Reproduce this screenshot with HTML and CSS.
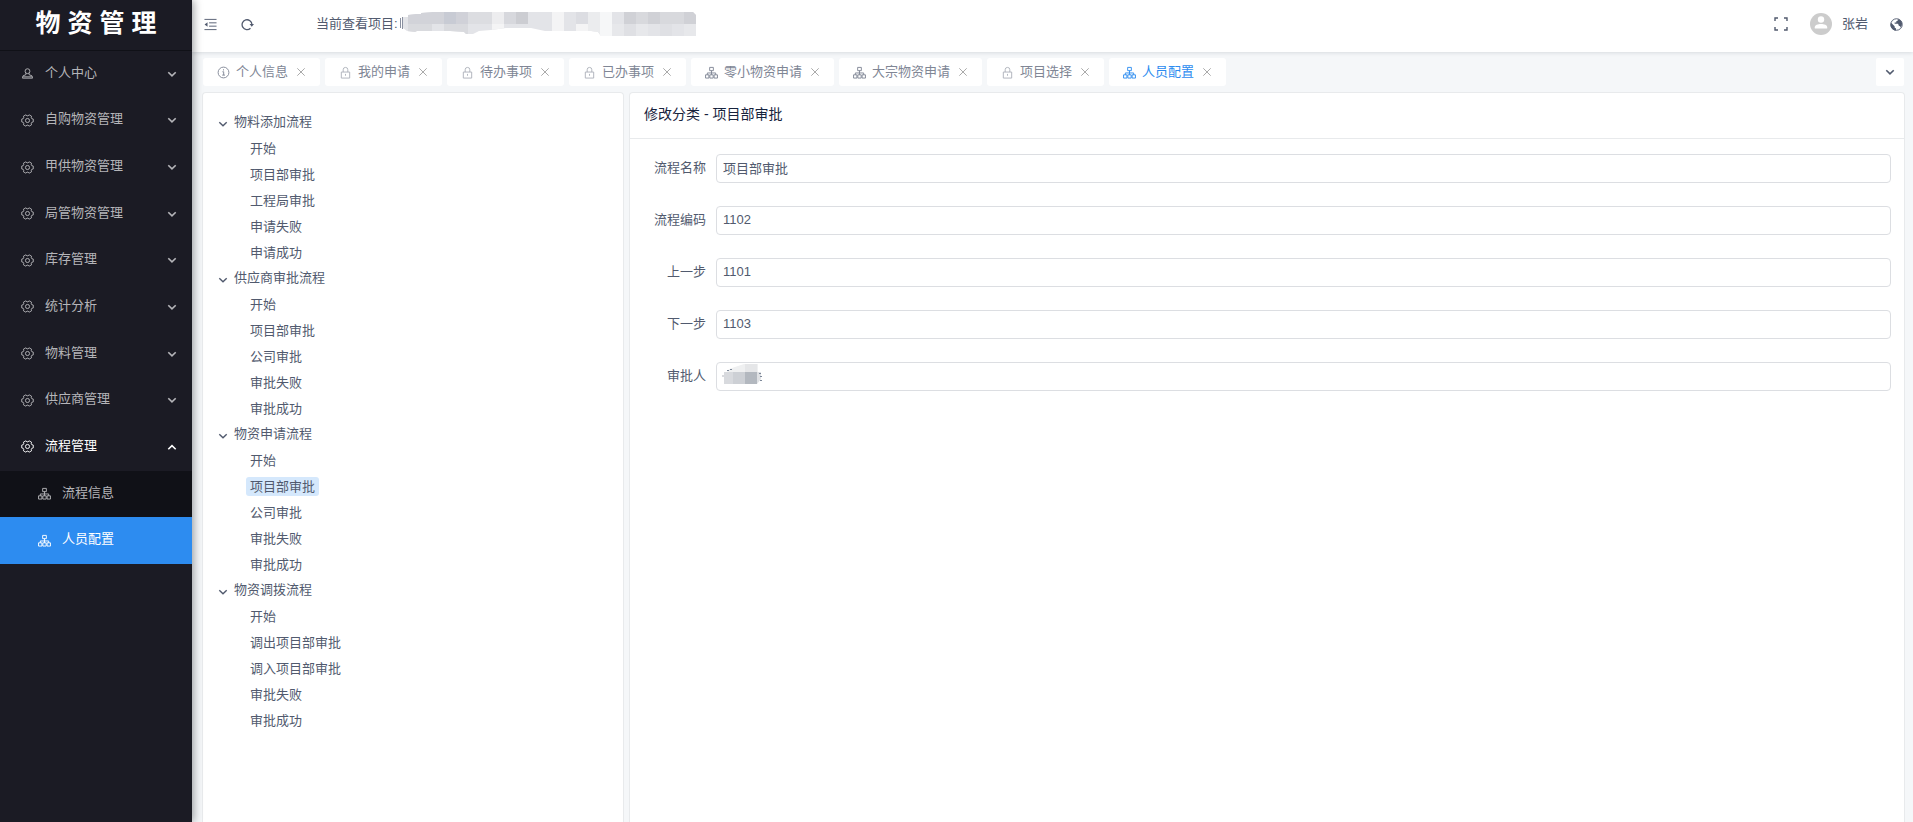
FILE: index.html
```html
<!DOCTYPE html>
<html lang="zh-CN">
<head>
<meta charset="utf-8">
<title>物资管理</title>
<link rel="stylesheet" href="styles.css">
</head>
<body>
<svg class="sprite" aria-hidden="true">
  <symbol id="i-gear" viewBox="0 0 14 14"><path d="M13.200 5.500v3l-1.600.5-.6.9.4 1.700-2.600 1.500L7.500 12h-1l-1.300 1.100-2.600-1.500.4-1.700-.6-.9-1.600-.5v-3L2.400 5l.6-.9-.4-1.700L5.200.9 6.500 2h1L8.800.9l2.600 1.500-.4 1.700.6.9z"/><circle cx="7" cy="7" r="2.200"/></symbol>
  <symbol id="i-person" viewBox="0 0 14 14"><circle cx="7" cy="4.500" r="2.600"/><path d="M5.300 6.600v1.600L2.100 9.600 1.600 12h10.800l-.5-2.400-3.200-1.400V6.600M2.300 10.600h9.400"/></symbol>
  <symbol id="i-tree" viewBox="0 0 14 14"><path d="M5 1.500h4v3.500H5zM7 5v4.500M2.500 9.500V7.500h9v2M.6 9.500h3.600v3.500H.6zM5.200 9.500h3.600v3.500H5.200zM9.800 9.500h3.600v3.500H9.800z"/></symbol>
  <symbol id="i-lock" viewBox="0 0 14 14"><path d="M2.500 6.500h9v6.500h-9zM4.500 6.500V4a2.500 2.500 0 0 1 5 0v2.500M7 8.500v2"/></symbol>
  <symbol id="i-info" viewBox="0 0 14 14"><circle cx="7" cy="7" r="5.800"/><path d="M5.800 6.200h1.400v3.600M5.600 9.800h3M7 3.500v1.300"/></symbol>
  <symbol id="i-down" viewBox="0 0 10 10"><path d="M1.300 3.200 5 6.800l3.700-3.600"/></symbol>
  <symbol id="i-up" viewBox="0 0 10 10"><path d="M1.300 7.200 5 3.600l3.700 3.600"/></symbol>
  <symbol id="i-close" viewBox="0 0 10 10"><path d="m1.300 1.300 7.400 7.400m0-7.400L1.300 8.700"/></symbol>
</svg>
<div class="layout">
  <aside class="sidebar">
    <h1 class="logo">物 资 管 理</h1>
    <nav class="menu">
      <button class="menu-item"><svg class="icon"><use href="#i-person"/></svg><span>个人中心</span><svg class="arrow"><use href="#i-down"/></svg></button>
      <button class="menu-item"><svg class="icon"><use href="#i-gear"/></svg><span>自购物资管理</span><svg class="arrow"><use href="#i-down"/></svg></button>
      <button class="menu-item"><svg class="icon"><use href="#i-gear"/></svg><span>甲供物资管理</span><svg class="arrow"><use href="#i-down"/></svg></button>
      <button class="menu-item"><svg class="icon"><use href="#i-gear"/></svg><span>局管物资管理</span><svg class="arrow"><use href="#i-down"/></svg></button>
      <button class="menu-item"><svg class="icon"><use href="#i-gear"/></svg><span>库存管理</span><svg class="arrow"><use href="#i-down"/></svg></button>
      <button class="menu-item"><svg class="icon"><use href="#i-gear"/></svg><span>统计分析</span><svg class="arrow"><use href="#i-down"/></svg></button>
      <button class="menu-item"><svg class="icon"><use href="#i-gear"/></svg><span>物料管理</span><svg class="arrow"><use href="#i-down"/></svg></button>
      <button class="menu-item"><svg class="icon"><use href="#i-gear"/></svg><span>供应商管理</span><svg class="arrow"><use href="#i-down"/></svg></button>
      <button class="menu-item open"><svg class="icon"><use href="#i-gear"/></svg><span>流程管理</span><svg class="arrow"><use href="#i-up"/></svg></button>
      <a class="menu-item sub" href="#info"><svg class="icon"><use href="#i-tree"/></svg><span>流程信息</span></a>
      <a class="menu-item sub active" href="#staff"><svg class="icon"><use href="#i-tree"/></svg><span>人员配置</span></a>
    </nav>
  </aside>
  <div class="main">
    <header class="header">
      <button class="tool" aria-label="折叠菜单"><svg class="icon" viewBox="0 0 14 14"><path d="M.5 1.500h13M5.500 5.200h8M5.500 8.800h8M.5 12.500h13"/><path class="solid" d="M3.800 4.600v4.800L.6 7z"/></svg></button>
      <button class="tool" aria-label="刷新"><svg class="icon" viewBox="0 0 14 14"><path class="bold" d="M10.200 11A5.300 5.300 0 1 1 11.800 7"/><path class="solid" d="M9.200 6.500H14l-2.400 2.900z"/></svg></button>
      <div class="project">
        <span>当前查看项目:</span>
        <svg class="redacted" viewBox="0 0 296 24" role="img" aria-label="已隐藏的项目名称">
          <clipPath id="smear"><path d="M3 5h5V3l8-1h5V1l12-1h260l3 3v21h-95l-3-4-7-1h-46l-14-3h-25l-15 2-12 1-6 3h-7l-2-2-14-1H17l-2 1-8-1-4-3z"/></clipPath>
          <path class="bar" d="M.5 6v10M2.500 5v12"/>
          <g clip-path="url(#smear)">
            <path fill="#e3e4e8" d="M0 0h296v24H0z"/>
            <path fill="#d2d3d9" d="M8 0h36v12H8z"/><path fill="#c8cbd4" d="M44 0h12v12H44z"/><path fill="#d0d1d8" d="M56 0h12v12H56z"/>
            <path fill="#dcdde1" d="M68 0h24v12H68z"/><path fill="#ededef" d="M92 0h12v12H92z"/><path fill="#d7d8dd" d="M104 0h12v12h-12z"/><path fill="#cccdd2" d="M116 0h12v12h-12z"/>
            <path fill="#d9dade" d="M8 12h24v12H8zM44 12h24v12H44z"/><path fill="#f4f4f5" d="M92 12h12v12H92zM152 0h12v24h-12zM176 12h12v12h-12z"/>
            <path fill="#dcdde2" d="M176 0h12v12h-12z"/><path fill="#ebecee" d="M188 0h12v24h-12z"/><path fill="#f6f7f8" d="M200 0h12v24h-12z"/>
            <path fill="#d0d1d6" d="M224 0h12v12h-12zM248 0h12v12h-12zM284 0h12v12h-12z"/><path fill="#d8d9dd" d="M236 0h12v12h-12zM260 0h24v12h-24z"/>
            <path fill="#dfe0e4" d="M224 12h12v12h-12zM260 12h12v12h-12z"/><path fill="#e7e8eb" d="M212 12h12v12h-12zM236 12h12v12h-12zM284 12h12v12h-12z"/>
          </g>
        </svg>
      </div>
      <button class="tool end" aria-label="全屏"><svg class="icon full" viewBox="0 0 14 14"><path d="M1 4V1h3M10 1h3v3M13 10v3h-3M4 13H1v-3"/></svg></button>
      <button class="user"><svg class="avatar" viewBox="0 0 22 22"><circle cx="11" cy="11" r="11" fill="#ccc"/><circle cx="11" cy="6.500" r="3.200" fill="#fff"/><path d="M4.800 15.500v-1.300c0-2.200 3-3.200 6.200-3.200s6.200 1 6.200 3.200v1.300z" fill="#fff"/></svg><span>张岩</span></button>
      <button class="tool" aria-label="语言"><svg class="icon" viewBox="0 0 14 14"><circle cx="7" cy="7" r="6.200"/><path class="solid" d="M1.200 5 5 8.800v1.400l1.500 1v2.300C3 13.500.6 10.500.6 7zM8.500 1v1.600l-1.700.9v1.300H5v1.400h3.700l.8 2.200 1.300.4.8 1.400c2-2.800 1.800-6-.3-7.900z"/></svg></button>
    </header>
    <div class="tabs">
      <div class="tab"><svg class="icon"><use href="#i-info"/></svg><a href="#t1">个人信息</a><button class="close" aria-label="关闭"><svg><use href="#i-close"/></svg></button></div>
      <div class="tab"><svg class="icon pale"><use href="#i-lock"/></svg><a href="#t2">我的申请</a><button class="close" aria-label="关闭"><svg><use href="#i-close"/></svg></button></div>
      <div class="tab"><svg class="icon pale"><use href="#i-lock"/></svg><a href="#t3">待办事项</a><button class="close" aria-label="关闭"><svg><use href="#i-close"/></svg></button></div>
      <div class="tab"><svg class="icon pale"><use href="#i-lock"/></svg><a href="#t4">已办事项</a><button class="close" aria-label="关闭"><svg><use href="#i-close"/></svg></button></div>
      <div class="tab"><svg class="icon"><use href="#i-tree"/></svg><a href="#t5">零小物资申请</a><button class="close" aria-label="关闭"><svg><use href="#i-close"/></svg></button></div>
      <div class="tab"><svg class="icon"><use href="#i-tree"/></svg><a href="#t6">大宗物资申请</a><button class="close" aria-label="关闭"><svg><use href="#i-close"/></svg></button></div>
      <div class="tab"><svg class="icon pale"><use href="#i-lock"/></svg><a href="#t7">项目选择</a><button class="close" aria-label="关闭"><svg><use href="#i-close"/></svg></button></div>
      <div class="tab current"><svg class="icon"><use href="#i-tree"/></svg><a href="#t8">人员配置</a><button class="close" aria-label="关闭"><svg><use href="#i-close"/></svg></button></div>
      <button class="more" aria-label="更多标签"><svg><use href="#i-down"/></svg></button>
    </div>
    <main class="content">
      <section class="card tree-card">
        <ul class="tree">
          <li><div class="node"><svg><use href="#i-down"/></svg><span>物料添加流程</span></div>
            <ul><li><span>开始</span></li><li><span>项目部审批</span></li><li><span>工程局审批</span></li><li><span>申请失败</span></li><li><span>申请成功</span></li></ul></li>
          <li><div class="node"><svg><use href="#i-down"/></svg><span>供应商审批流程</span></div>
            <ul><li><span>开始</span></li><li><span>项目部审批</span></li><li><span>公司审批</span></li><li><span>审批失败</span></li><li><span>审批成功</span></li></ul></li>
          <li><div class="node"><svg><use href="#i-down"/></svg><span>物资申请流程</span></div>
            <ul><li><span>开始</span></li><li><span class="selected">项目部审批</span></li><li><span>公司审批</span></li><li><span>审批失败</span></li><li><span>审批成功</span></li></ul></li>
          <li><div class="node"><svg><use href="#i-down"/></svg><span>物资调拨流程</span></div>
            <ul><li><span>开始</span></li><li><span>调出项目部审批</span></li><li><span>调入项目部审批</span></li><li><span>审批失败</span></li><li><span>审批成功</span></li></ul></li>
        </ul>
      </section>
      <section class="card form-card">
        <h2 class="card-title">修改分类 - 项目部审批</h2>
        <form class="form">
          <label for="name">流程名称</label><input id="name" type="text" value="项目部审批">
          <label for="code">流程编码</label><input id="code" type="text" value="1102">
          <label for="prev">上一步</label><input id="prev" type="text" value="1101">
          <label for="next">下一步</label><input id="next" type="text" value="1103">
          <label for="approver">审批人</label>
          <div class="masked"><input id="approver" type="text">
            <svg viewBox="0 0 42 24" aria-hidden="true"><path fill="#eff0f1" d="M7 6 22 1h14v8H5z"/><path fill="#e5e6e8" d="M23 1h12v8H23z"/><path fill="#d8dade" d="M2 9h9v12H2zM0 12h2v2H0z"/><path fill="#cdd0d5" d="M11 9h12v12H11z"/><path fill="#b3b8bf" d="M23 9h12v12H23z"/><path fill="#dfe1e4" d="M35 9h4v7l-4 5z"/><path fill="#7d8899" d="M5 7h2v1H5zM8 6h2v1H8zM37 10h2v1h-2zM38 13h2v1h-2zM38 17h2v1h-2z"/></svg></div>
        </form>
      </section>
    </main>
  </div>
</div>
</body>
</html>
```
FILE: styles.css
```css
* { box-sizing: border-box; }
body {
  margin: 0;
  font: 13px/20px "Liberation Sans", "Noto Sans CJK SC", sans-serif;
  color: #515a6e;
  background: #f5f7f9;
}
button { font: inherit; color: inherit; background: none; border: 0; padding: 0; cursor: pointer; }
a { color: inherit; text-decoration: none; }
ul { list-style: none; margin: 0; padding: 0; }
svg { display: block; flex: none; fill: none; stroke: currentColor; stroke-width: 1; }
.solid { fill: currentColor; stroke: none; }
.bold { stroke-width: 1.4; }
.sprite { position: absolute; width: 0; height: 0; }
.icon { width: 13px; height: 13px; }
.layout { display: flex; height: 100vh; overflow: hidden; }

.sidebar {
  position: relative;
  z-index: 2;
  flex: none;
  width: 192px;
  background: #1b1b24;
  color: #b5b5b9;
  box-shadow: 2px 0 8px rgba(29, 35, 41, .4);
}
.logo {
  margin: 0;
  height: 51px;
  padding: 0 0 5px;
  border-bottom: 1px solid #101117;
  display: flex;
  align-items: center;
  justify-content: center;
  font-size: 25px;
  line-height: 36px;
  color: #fff;
}
.menu { display: grid; grid-auto-rows: 1fr; min-height: 513px; }
.menu-item { display: flex; align-items: center; gap: 11px; padding: 0 15px 3px 21px; text-align: left; }
.menu-item span { flex: 1; }
.menu-item .icon, .menu-item .arrow { margin-top: 2px; }
.arrow { width: 10px; height: 10px; stroke-width: 1.6; }
.menu-item.open { color: #fff; }
.menu-item.sub { background: #101117; padding-left: 38px; }
.menu-item.active { background: #2d8cf0; color: #fff; }

.main { flex: 1; min-width: 0; display: flex; flex-direction: column; }
.header {
  position: relative;
  z-index: 1;
  flex: none;
  height: 52px;
  padding: 0 9px 4px 12px;
  display: flex;
  align-items: center;
  background: #fff;
  box-shadow: 0 1px 4px rgba(0, 21, 41, .12);
}
.tool { width: 14px; margin-right: 23px; }
.tool:last-child { margin-right: 0; }
.tool .full { width: 14px; height: 14px; stroke-width: 1.4; }
.project { display: flex; align-items: center; gap: 2px; margin-left: 38px; }
.redacted { width: 296px; height: 24px; stroke: none; }
.bar { stroke: #8a90a0; }
.tool.end { margin-left: auto; margin-right: 22px; }
.user { display: flex; align-items: center; gap: 10px; margin-right: 22px; }
.avatar { width: 22px; height: 22px; stroke: none; }

.tabs { display: flex; gap: 5px; padding: 6px 9px 6px 11px; color: #808695; }
.tab { display: flex; align-items: center; height: 28px; padding: 0 14px; gap: 6px; background: #fff; border-radius: 3px; }
.tab.current > .icon, .tab.current > a { color: #2d8cf0; }
.pale { color: #adb1ba; }
.close { color: #aaa; margin-left: 2px; }
.close svg { width: 10px; height: 10px; }
.more { margin-left: auto; width: 28px; height: 28px; background: #fff; border-radius: 2px; display: grid; place-items: center; color: #515a6e; }
.more svg { width: 10px; height: 10px; stroke-width: 1.6; }

.content { flex: 1; min-height: 0; display: grid; grid-template-columns: repeat(4, 1fr); gap: 5px; padding: 0 8px 0 10px; }
.card { background: #fff; border: 1px solid #e8eaec; border-bottom: 0; border-radius: 4px 4px 0 0; }
.form-card { grid-column: span 3; }
.tree { padding: 16px 15px; }
.tree li { line-height: 26px; }
.node { display: flex; align-items: center; gap: 6px; }
.node svg { width: 10px; height: 10px; stroke-width: 1.4; margin-top: 4px; }
.tree ul { padding-left: 28px; }
.tree ul li { display: flex; align-items: center; height: 26px; }
.tree ul span { padding: 0 4px; line-height: 19px; border-radius: 3px; }
.tree .selected { background: #d5e8fc; }

.card-title { margin: 0; padding: 11px 14px 14px; font-size: 14px; line-height: 20px; font-weight: 400; color: #17233d; border-bottom: 1px solid #e8eaec; }
.form { display: grid; grid-template-columns: 76px 1fr; column-gap: 10px; row-gap: 23px; padding: 15px 13px 15px 0; align-items: center; }
.form label { text-align: right; padding-bottom: 2px; }
.form input {
  display: block;
  width: 100%;
  height: 29px;
  padding: 0 6px 2px;
  border: 1px solid #dcdee2;
  border-radius: 4px;
  font: inherit;
  color: #515a6e;
  background: #fff;
}
.masked { position: relative; }
.masked svg { position: absolute; left: 6px; top: 1px; width: 42px; height: 24px; stroke: none; }
```
